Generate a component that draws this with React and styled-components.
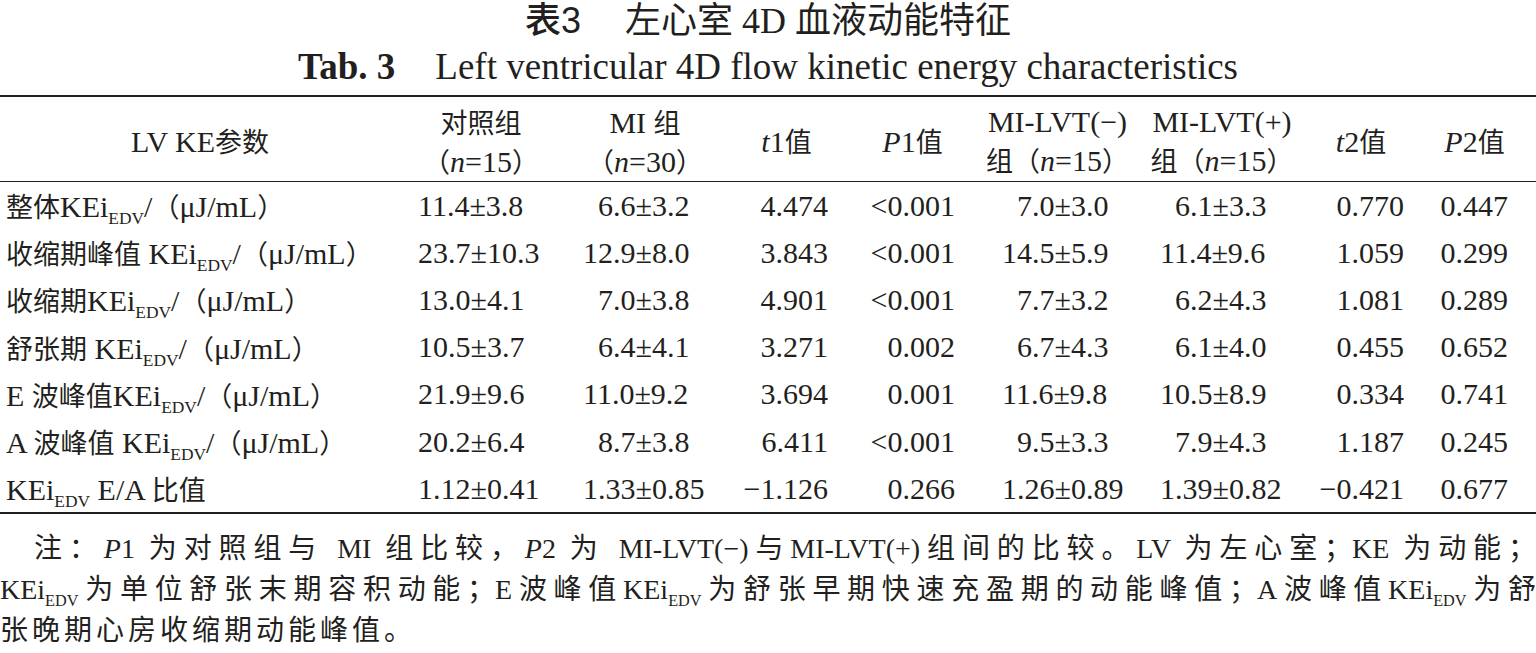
import React from 'react'
import styled, { createGlobalStyle } from 'styled-components'

const ink = '#231f20'

const GlobalStyle = createGlobalStyle`
  html, body {
    margin: 0;
    padding: 0;
    background: #fff;
  }
  body {
    color: ${ink};
    font-family: "Liberation Serif", "Noto Sans CJK SC", serif;
  }
`

const Page = styled.div`
  width: 1536px;
  height: 653px;
  overflow: hidden;
`

const CnTitle = styled.h1`
  margin: 0;
  height: 42px;
  line-height: 42px;
  text-align: center;
  font-size: 36px;
  font-weight: 400;
  white-space: pre;
`

const Label = styled.span`
  font-family: "Liberation Sans", "Noto Sans CJK SC", sans-serif;
  font-weight: 500;
  margin-right: 44px;
`

const EnTitle = styled.h2`
  margin: 0;
  height: 50px;
  line-height: 50px;
  text-align: center;
  font-size: 37px;
  font-weight: 400;
  white-space: pre;

  & b {
    margin-right: 40px;
  }
`

// CJK runs are set a little smaller than the Latin text, as in the print
const Han = styled.span`
  font-family: "Noto Sans CJK SC", sans-serif;
  font-size: 0.9em;
`

const Table = styled.div`
  margin-top: 3px;
  display: grid;
  grid-template-columns: 400px 162px 166px 117px 135px 155px 174px 104px 123px;
  border-top: 2px solid ${ink};
  border-bottom: 2px solid ${ink};
  font-size: 30px;
`

const HeadCell = styled.div`
  box-sizing: border-box;
  height: 85px;
  padding-top: 5px;
  border-bottom: 1.5px solid ${ink};
  display: flex;
  flex-direction: column;
  justify-content: center;
  align-items: center;
  line-height: 38px;
  white-space: pre;
`

const Cell = styled.div`
  box-sizing: border-box;
  height: 47.2px;
  display: flex;
  align-items: center;
  justify-content: ${p => (p.$end ? 'flex-end' : 'flex-start')};
  padding: ${p => p.$pad};
  white-space: pre;
`

const Sub = styled.sub`
  font-size: 0.58em;
  vertical-align: -0.42em;
  line-height: 0;
`

const Pad = styled.span`
  display: inline-block;
  width: 0.5em;
`

const Notes = styled.div`
  margin-top: 14px;
  font-size: 28px;
  line-height: 41px;
`

const NoteLine = styled.div`
  text-align: justify;
  text-align-last: ${p => (p.$last ? 'left' : 'justify')};
  text-indent: ${p => (p.$first ? '34px' : '0')};
  letter-spacing: ${p => (p.$last ? '4px' : '0')};
  white-space: nowrap;
`

const cjk = /([\u3000-\u303f\u4e00-\u9fff\uff00-\uffef]+)/
const mixed = text =>
  text.split(cjk).map((part, i) => (i % 2 ? <Han key={i}>{part}</Han> : part))

const KEi = () => (
  <>
    KEi<Sub>EDV</Sub>
  </>
)

const columns = [
  { pad: '0 0 0 6px' },
  { pad: '0 0 0 18px' },
  { pad: '0 0 0 21px' },
  { pad: '0 17px 0 0', end: true },
  { pad: '0 25px 0 0', end: true },
  { pad: '0 0 0 22px' },
  { pad: '0 0 0 25px' },
  { pad: '0 9px 0 0', end: true },
  { pad: '0 28px 0 0', end: true },
]

const rows = [
  ['整体', '/（μJ/mL）', '11.4±3.8', '6.6±3.2', '4.474', '<0.001', '7.0±3.0', '6.1±3.3', '0.770', '0.447'],
  ['收缩期峰值 ', '/（μJ/mL）', '23.7±10.3', '12.9±8.0', '3.843', '<0.001', '14.5±5.9', '11.4±9.6', '1.059', '0.299'],
  ['收缩期', '/（μJ/mL）', '13.0±4.1', '7.0±3.8', '4.901', '<0.001', '7.7±3.2', '6.2±4.3', '1.081', '0.289'],
  ['舒张期 ', '/（μJ/mL）', '10.5±3.7', '6.4±4.1', '3.271', '0.002', '6.7±4.3', '6.1±4.0', '0.455', '0.652'],
  ['E 波峰值', '/（μJ/mL）', '21.9±9.6', '11.0±9.2', '3.694', '0.001', '11.6±9.8', '10.5±8.9', '0.334', '0.741'],
  ['A 波峰值 ', '/（μJ/mL）', '20.2±6.4', '8.7±3.8', '6.411', '<0.001', '9.5±3.3', '7.9±4.3', '1.187', '0.245'],
  ['', ' E/A 比值', '1.12±0.41', '1.33±0.85', '−1.126', '0.266', '1.26±0.89', '1.39±0.82', '−0.421', '0.677'],
]

// values like "6.6±3.2" get a half-em pad so the ± lines up with "11.4±3.8"
const Value = ({ text }) => {
  const short = text.includes('±') && text.split('±')[0].length === 3
  return (
    <span>
      {short && <Pad />}
      {text}
    </span>
  )
}

const Header = () => (
  <>
    <HeadCell>
      <span>LV KE{mixed('参数')}</span>
    </HeadCell>
    <HeadCell>
      <span>{mixed('对照组')}</span>
      <span><Han>（</Han><i>n</i>=15<Han>）</Han></span>
    </HeadCell>
    <HeadCell>
      <span>MI {mixed('组')}</span>
      <span><Han>（</Han><i>n</i>=30<Han>）</Han></span>
    </HeadCell>
    <HeadCell>
      <span><i>t</i>1{mixed('值')}</span>
    </HeadCell>
    <HeadCell>
      <span><i>P</i>1{mixed('值')}</span>
    </HeadCell>
    <HeadCell>
      <span>MI-LVT(−)</span>
      <span><Han>组（</Han><i>n</i>=15<Han>）</Han></span>
    </HeadCell>
    <HeadCell>
      <span>MI-LVT(+)</span>
      <span><Han>组（</Han><i>n</i>=15<Han>）</Han></span>
    </HeadCell>
    <HeadCell>
      <span><i>t</i>2{mixed('值')}</span>
    </HeadCell>
    <HeadCell>
      <span><i>P</i>2{mixed('值')}</span>
    </HeadCell>
  </>
)

export default function App() {
  return (
    <Page>
      <GlobalStyle />
      <CnTitle>
        <Label>表3</Label>左心室 4D 血液动能特征
      </CnTitle>
      <EnTitle>
        <b>Tab. 3</b>Left ventricular 4D flow kinetic energy characteristics
      </EnTitle>
      <Table>
        <Header />
        {rows.map((row, r) => {
          const [pre, post, ...values] = row
          return (
            <React.Fragment key={r}>
              <Cell $pad={columns[0].pad}>
                <span>
                  {mixed(pre)}
                  <KEi />
                  {mixed(post)}
                </span>
              </Cell>
              {values.map((v, c) => (
                <Cell key={c} $pad={columns[c + 1].pad} $end={columns[c + 1].end}>
                  <Value text={v} />
                </Cell>
              ))}
            </React.Fragment>
          )
        })}
      </Table>
      <Notes>
        <NoteLine $first>
          注：<i>P</i>1 为对照组与 MI 组比较，<i>P</i>2 为 MI-LVT(−)与MI-LVT(+)组间的比较。LV 为左心室；KE 为动能；
        </NoteLine>
        <NoteLine>
          <KEi />为单位舒张末期容积动能；E波峰值<KEi />为舒张早期快速充盈期的动能峰值；A波峰值<KEi />为舒
        </NoteLine>
        <NoteLine $last>张晚期心房收缩期动能峰值。</NoteLine>
      </Notes>
    </Page>
  )
}
